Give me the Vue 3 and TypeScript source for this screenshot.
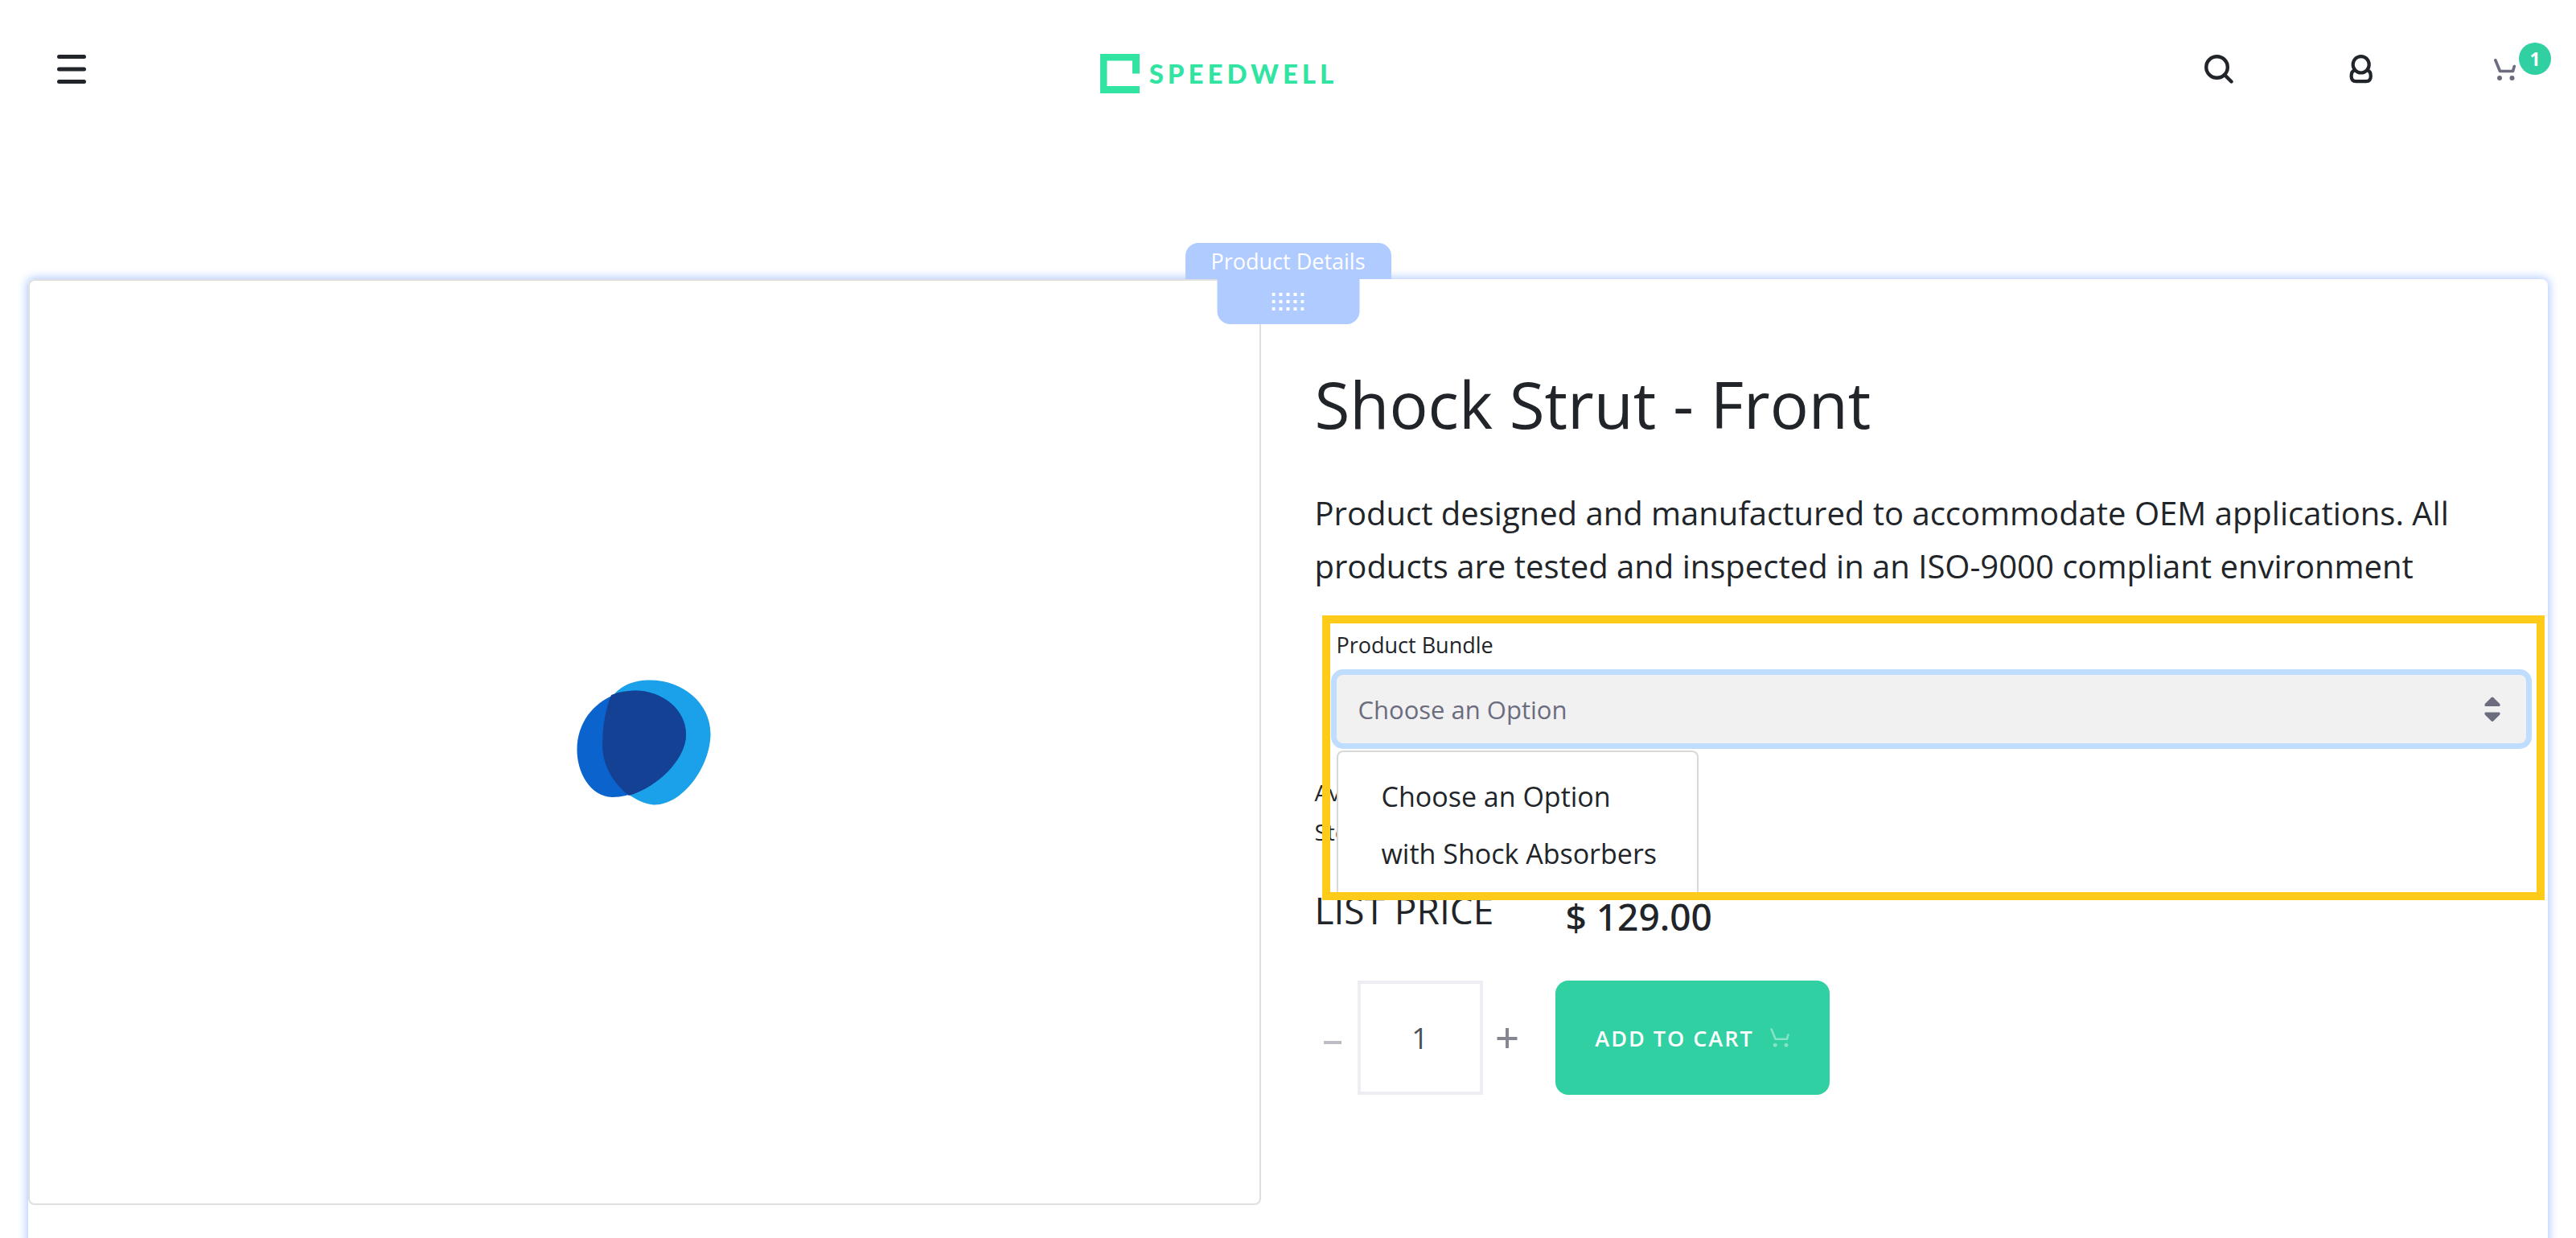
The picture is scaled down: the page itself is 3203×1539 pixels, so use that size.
<script setup lang="ts">
import { ref } from 'vue'

const options: string[] = ['Choose an Option', 'with Shock Absorbers']
const selected = ref<string>(options[0])
const menuOpen = ref<boolean>(true)
const quantity = ref<number>(1)
const cartCount = ref<number>(1)

function choose(option: string): void {
  selected.value = option
  menuOpen.value = false
}

function decrease(): void {
  quantity.value = Math.max(1, quantity.value - 1)
}
</script>

<template>
  <div class="page">
    <header class="header">
      <button class="icon-button menu-button" type="button" aria-label="Open menu">
        <svg width="36" height="36" viewBox="0 0 36 36" fill="#212529">
          <rect x="0" y="0" width="36" height="5" rx="2.5" />
          <rect x="0" y="15.5" width="36" height="5" rx="2.5" />
          <rect x="0" y="31" width="36" height="5" rx="2.5" />
        </svg>
      </button>

      <a class="logo" href="#">
        <svg width="49" height="49" viewBox="0 0 49 49" fill="#31e4a2">
          <path d="M0 0H49V24.500H40V8.500H8.500V40H49V49H0Z" />
        </svg>
        <span class="logo-text">SPEEDWELL</span>
      </a>

      <nav class="actions">
        <button class="icon-button" type="button" aria-label="Search">
          <svg width="36" height="36" viewBox="0 0 36 36" fill="none" stroke="#212529" stroke-width="4.400">
            <circle cx="15.500" cy="15.500" r="13.300" />
            <path d="M25 25L33.500 33.500" stroke-linecap="round" />
          </svg>
        </button>
        <button class="icon-button" type="button" aria-label="Account">
          <svg width="30" height="36" viewBox="0 0 30 36" fill="none" stroke="#212529" stroke-width="4.200">
            <ellipse cx="14.700" cy="12.300" rx="10" ry="10.200" />
            <path d="M6.500 19.200C3.500 20.500 2.600 23 2.600 26.500C2.600 31 5 33.100 8.500 33.100H21C24.500 33.100 26.800 31 26.800 26.500C26.800 23 26 20.500 22.900 19.200" />
          </svg>
        </button>
        <button class="icon-button cart-button" type="button" aria-label="Cart">
          <svg width="27" height="27" viewBox="0 0 27 27">
            <path d="M1.800 1.800L7.500 15.500H23.500L25.300 9.500" fill="none" stroke="#6b6c7e" stroke-width="3.600" stroke-linecap="round" stroke-linejoin="round" />
            <circle cx="7" cy="24" r="3" fill="#6b6c7e" />
            <circle cx="22.500" cy="24" r="3" fill="#6b6c7e" />
          </svg>
          <span class="badge">{{ cartCount }}</span>
        </button>
      </nav>
    </header>

    <main class="frame">
      <div class="frame-tab">Product Details</div>
      <div class="drag-tab">
        <svg width="40" height="22" viewBox="0 0 40 22" fill="#ffffff">
          <template v-for="row in 3" :key="row">
            <rect v-for="col in 5" :key="col" :x="(col - 1) * 9" :y="(row - 1) * 9" width="4" height="4" />
          </template>
        </svg>
      </div>

      <section class="gallery">
        <svg width="168" height="156" viewBox="0 0 168 156">
          <path d="M88 0.500C130 -1 167 28 166.500 68C166 108 132 156 96 155.500C64 153 32 116 32 82C32 62 36 42 42 28C46 12 66 1 88 0.500Z" fill="#1ba0ea" />
          <path d="M72 13.500C106 13 136 37 136 68C136 104 88 146 44 146C16 145 0 114 0.500 86C1 44 34 15 72 13.500Z" fill="#0b63ce" />
          <path d="M72 13.500C106 13 136 37 136 68C136 98 102 133 65 144C46 130 32 106 32 82C32 58 36 36 43 19C52 15 62 13.800 72 13.500Z" fill="#144194" />
        </svg>
      </section>

      <section class="details">
        <h1 class="title">Shock Strut - Front</h1>
        <p class="description">
          Product designed and manufactured to accommodate OEM applications. All products are tested
          and inspected in an ISO-9000 compliant environment
        </p>

        <div class="bundle">
          <label class="bundle-label" for="bundle">Product Bundle</label>
          <div class="select-wrap">
            <select id="bundle" v-model="selected" class="select">
              <option v-for="option in options" :key="option" :value="option">{{ option }}</option>
            </select>
            <svg class="select-arrows" width="20" height="32" viewBox="0 0 20 32" fill="#6b6c7e">
              <path d="M8.600 1.200Q10 0 11.400 1.200L19 8.800Q20.500 11.500 18.500 12H1.500Q-0.500 11.500 1 8.800Z" />
              <path d="M8.600 30.300Q10 31.500 11.400 30.300L19 22.700Q20.500 20 18.500 19.500H1.500Q-0.500 20 1 22.700Z" />
            </svg>
            <ul v-if="menuOpen" class="menu">
              <li v-for="option in options" :key="option">
                <button class="menu-item" type="button" @click="choose(option)">{{ option }}</button>
              </li>
            </ul>
          </div>
          <div class="highlight"></div>
        </div>

        <div class="stock">
          <div>Availability</div>
          <div>Stock</div>
        </div>

        <div class="price-row">
          <span class="price-label">LIST PRICE</span>
          <span class="price">$ 129.00</span>
        </div>

        <div class="buy-row">
          <button class="step" type="button" aria-label="Decrease quantity" @click="decrease">
            <svg width="26" height="26" viewBox="0 0 26 26"><path d="M1 19H23" stroke="#bdbdc6" stroke-width="4" /></svg>
          </button>
          <input v-model="quantity" class="quantity" type="text" aria-label="Quantity" />
          <button class="step" type="button" aria-label="Increase quantity" @click="quantity++">
            <svg width="26" height="26" viewBox="0 0 26 26"><path d="M0.500 14H25.500M13 1V26" stroke="#85868f" stroke-width="4" /></svg>
          </button>
          <button class="add" type="button" @click="cartCount += quantity">
            <span>ADD TO CART</span>
            <svg width="24" height="24" viewBox="0 0 27 27">
              <path d="M1.800 1.800L7.500 15.500H23.500L25.300 9.500" fill="none" stroke="#83e3c8" stroke-width="3" stroke-linecap="round" stroke-linejoin="round" />
              <circle cx="7" cy="24" r="2.800" fill="#83e3c8" />
              <circle cx="22.500" cy="24" r="2.800" fill="#83e3c8" />
            </svg>
          </button>
        </div>
      </section>
    </main>
  </div>
</template>

<style>
body {
  margin: 0;
  background: #fff;
}
</style>

<style scoped>
.page {
  box-sizing: border-box;
  height: 100vh;
  overflow: hidden;
  font-family: "Open Sans", "Noto Sans", sans-serif;
  color: #212529;
}

.page *,
.page *::before {
  box-sizing: border-box;
}

button {
  margin: 0;
  padding: 0;
  border: 0;
  background: none;
  font-family: inherit;
  color: inherit;
  cursor: pointer;
}

svg {
  display: block;
}

.header {
  display: grid;
  grid-template-columns: 1fr auto 1fr;
  align-items: center;
  height: 172px;
}

.menu-button {
  justify-self: start;
  margin-left: 71px;
}

.logo {
  display: flex;
  align-items: center;
  gap: 12px;
  padding: 10px 172px 0 0;
  color: #31e4a2;
  text-decoration: none;
}

.logo-text {
  font-family: Lato, "Open Sans", sans-serif;
  font-size: 33px;
  font-weight: 900;
  line-height: 40px;
  letter-spacing: 5px;
}

.actions {
  display: flex;
  align-items: center;
  justify-content: flex-end;
  padding-right: 75px;
}

.actions .icon-button + .icon-button {
  margin-left: 144px;
}

.actions .cart-button {
  position: relative;
}

.actions .icon-button + .cart-button {
  margin-left: 150px;
}

.badge {
  position: absolute;
  left: 31px;
  top: -20px;
  width: 40px;
  height: 40px;
  border-radius: 50%;
  background: #30d0a3;
  color: #fff;
  font-size: 23px;
  font-weight: 700;
  line-height: 40px;
  text-align: center;
}

.frame {
  position: relative;
  display: grid;
  grid-template-columns: 1fr 1fr;
  align-items: start;
  margin: 175px 35px 0;
  min-height: 100vh;
  border-radius: 8px;
  box-shadow: 0 0 12px 2px #b0cbff;
}

.frame-tab,
.drag-tab {
  position: absolute;
  left: 50%;
  transform: translateX(-50%);
  background: #b0cbff;
}

.frame-tab {
  bottom: 100%;
  width: 256px;
  height: 45px;
  border-radius: 16px 16px 0 0;
  color: #fff;
  font-size: 27px;
  line-height: 45px;
  text-align: center;
}

.drag-tab {
  top: 0;
  display: flex;
  justify-content: center;
  width: 177px;
  height: 56px;
  padding-top: 17px;
  border-radius: 0 0 16px 16px;
}

.gallery {
  display: flex;
  align-items: center;
  justify-content: center;
  height: 1151px;
  margin-right: 34px;
  border: 2px solid #dfdfdf;
  border-radius: 8px;
}

.details {
  padding: 107px 0 0 33px;
}

.title {
  margin: 0;
  font-size: 80px;
  font-weight: 400;
  line-height: 96px;
}

.description {
  margin: 55px 0 0;
  padding-right: 66px;
  font-size: 40px;
  line-height: 66px;
}

.bundle {
  position: relative;
  margin-top: 47px;
  padding: 0 27px;
}

.bundle-label {
  display: block;
  margin-bottom: 19px;
  font-size: 27px;
  line-height: 36px;
}

.select-wrap {
  position: relative;
}

.select {
  display: block;
  width: 100%;
  height: 85px;
  padding: 0 80px 0 27px;
  border: 0;
  border-radius: 8px;
  outline: 0;
  appearance: none;
  background: #f1f1f2;
  box-shadow: 0 0 0 7px #bfddff;
  color: #6b6c7e;
  font-family: inherit;
  font-size: 31px;
}

.select-arrows {
  position: absolute;
  right: 32px;
  top: 27px;
  pointer-events: none;
}

.menu {
  position: absolute;
  left: 0;
  top: 94px;
  width: 450px;
  margin: 0;
  padding: 19px 0;
  border: 2px solid #d8d8d8;
  border-radius: 8px;
  background: #fff;
  list-style: none;
}

.menu-item {
  display: block;
  width: 100%;
  height: 71px;
  padding-left: 54px;
  font-size: 34px;
  text-align: left;
}

.highlight {
  position: absolute;
  inset: -19px 4px -195px 9px;
  border: 10px solid #ffcb1a;
  pointer-events: none;
}

.stock {
  margin-top: 37px;
  font-size: 28px;
  line-height: 49px;
}

.price-row {
  display: flex;
  align-items: flex-start;
  margin-top: 40px;
  height: 64px;
  font-size: 46px;
  line-height: 64px;
}

.price-label {
  width: 312px;
}

.price {
  padding-top: 8px;
  font-family: "Noto Sans", "Open Sans", sans-serif;
  font-weight: 500;
}

.buy-row {
  display: flex;
  align-items: center;
  margin-top: 56px;
  padding-left: 10px;
}

.quantity {
  width: 156px;
  height: 142px;
  margin: 0 17px;
  padding: 0;
  border: 4px solid #edeef3;
  outline: 0;
  background: #fff;
  color: #495057;
  font-family: inherit;
  font-size: 36px;
  text-align: center;
}

.add {
  display: flex;
  align-items: center;
  justify-content: center;
  gap: 20px;
  width: 341px;
  height: 142px;
  margin-left: 47px;
  border-radius: 16px;
  background: #30d0a3;
  color: #fff;
  font-size: 27px;
  font-weight: 600;
  letter-spacing: 2px;
}
</style>
